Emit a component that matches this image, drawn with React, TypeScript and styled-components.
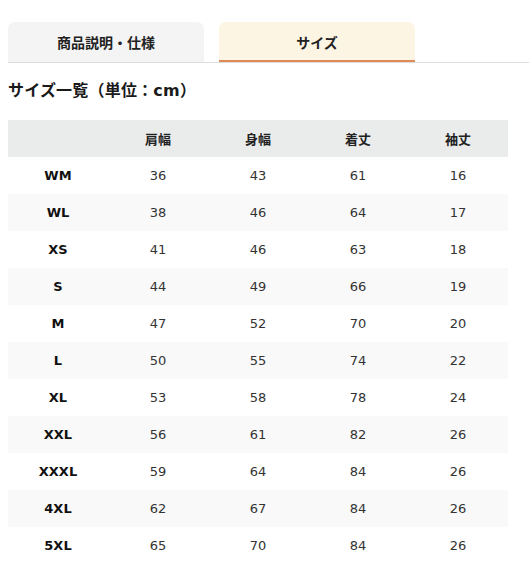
import React from 'react';
import styled, { createGlobalStyle } from 'styled-components';

const GlobalStyle = createGlobalStyle`
  body {
    margin: 0;
    padding: 0 0 0 8px;
    background: #fff;
    color: #222;
    font-family: "DejaVu Sans", Verdana, "Noto Sans CJK JP", sans-serif;
  }
`;

const Page = styled.div`
  padding-top: 22px;
`;

const TabBar = styled.div`
  display: flex;
  gap: 15px;
  border-bottom: 1px solid #dcdcdc;
`;

const Tab = styled.div<{ $active?: boolean }>`
  width: 196px;
  height: 40px;
  display: flex;
  align-items: center;
  justify-content: center;
  border-radius: 7px 7px 0 0;
  background: ${(p) => (p.$active ? '#fcf5e3' : '#f4f4f4')};
  box-shadow: ${(p) => (p.$active ? 'inset 0 -2px 0 #e08a55' : 'none')};
  font-family: "Noto Sans CJK JP", sans-serif;
  font-weight: 700;
  font-size: 14px;
  color: #222;
`;

const Heading = styled.h2`
  margin: 15px 0 0;
  height: 26px;
  font-family: "DejaVu Sans", "Noto Sans CJK JP", sans-serif;
  font-size: 16px;
  font-weight: 700;
  line-height: 26px;
  color: #1a1a1a;
  letter-spacing: 0.2px;
`;

const Table = styled.table`
  margin-top: 16px;
  width: 500px;
  border-collapse: collapse;
  table-layout: fixed;
  font-size: 13px;
`;

const HeadCell = styled.th`
  height: 37px;
  padding: 0;
  background: #eaecec;
  font-family: "Noto Sans CJK JP", sans-serif;
  font-weight: 700;
  font-size: 13px;
  text-align: center;
  color: #222;
`;

const Row = styled.tr<{ $striped: boolean }>`
  background: ${(p) => (p.$striped ? '#f9f9f9' : '#fff')};
`;

const Cell = styled.td<{ $label?: boolean }>`
  height: 37px;
  padding: 0;
  text-align: center;
  font-weight: ${(p) => (p.$label ? 700 : 400)};
  color: ${(p) => (p.$label ? '#111' : '#333')};
`;

const columns = ['', '肩幅', '身幅', '着丈', '袖丈'];

const rows: [string, number, number, number, number][] = [
  ['WM', 36, 43, 61, 16],
  ['WL', 38, 46, 64, 17],
  ['XS', 41, 46, 63, 18],
  ['S', 44, 49, 66, 19],
  ['M', 47, 52, 70, 20],
  ['L', 50, 55, 74, 22],
  ['XL', 53, 58, 78, 24],
  ['XXL', 56, 61, 82, 26],
  ['XXXL', 59, 64, 84, 26],
  ['4XL', 62, 67, 84, 26],
  ['5XL', 65, 70, 84, 26],
];

export default function App(): JSX.Element {
  return (
    <Page>
      <GlobalStyle />
      <TabBar>
        <Tab>商品説明・仕様</Tab>
        <Tab $active>サイズ</Tab>
      </TabBar>
      <Heading>サイズ一覧（単位：cm）</Heading>
      <Table>
        <thead>
          <tr>
            {columns.map((c, i) => (
              <HeadCell key={i}>{c}</HeadCell>
            ))}
          </tr>
        </thead>
        <tbody>
          {rows.map(([size, ...vals], i) => (
            <Row key={size} $striped={i % 2 === 1}>
              <Cell $label>{size}</Cell>
              {vals.map((v, j) => (
                <Cell key={j}>{v}</Cell>
              ))}
            </Row>
          ))}
        </tbody>
      </Table>
    </Page>
  );
}
